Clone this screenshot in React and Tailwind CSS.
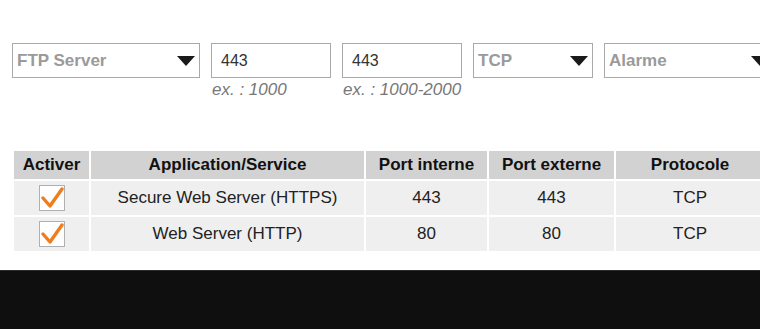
import React from "react";

const Arrow = () => (
  <svg width="18" height="10" viewBox="0 0 18 10" className="shrink-0">
    <polygon points="0,0 18,0 9,10" fill="#1a1a1a" />
  </svg>
);

const Select = ({ label, w }) => (
  <div
    className={`${w} h-[35px] shrink-0 border border-[#a9a9a9] bg-white flex items-center justify-between pl-[4px] pr-[4px]`}
  >
    <span className="text-[17px] font-bold text-[#9a9a9a]">{label}</span>
    <Arrow />
  </div>
);

const Input = ({ value, hint }) => (
  <div className="flex flex-col shrink-0">
    <div className="w-[120px] h-[35px] border border-[#a9a9a9] bg-white flex items-center pl-[9px] text-[16px] text-[#333]">
      {value}
    </div>
    <div className="mt-[2px] pl-[1px] text-[17px] italic text-[#777] leading-[20px]">{hint}</div>
  </div>
);

const Check = () => (
  <div className="w-[26px] h-[26px] border border-[#b0b0b0] bg-white mx-auto flex items-center justify-center">
    <svg width="24" height="22" viewBox="0 0 24 22">
      <path
        d="M3 11 L10 19 L22 2"
        fill="none"
        stroke="#ee7d1f"
        strokeWidth="3.4"
        strokeLinecap="round"
        strokeLinejoin="round"
      />
    </svg>
  </div>
);

const rows = [
  ["Secure Web Server (HTTPS)", "443", "443", "TCP"],
  ["Web Server (HTTP)", "80", "80", "TCP"],
];

export default function App() {
  return (
    <div
      className="w-[760px] h-[329px] overflow-hidden bg-white flex flex-col"
      style={{ fontFamily: '"Liberation Sans", Arial, sans-serif' }}
    >
      <div className="flex-1">
        <div className="flex items-start gap-[11px] pl-[12px] pt-[43px] w-[800px]">
          <Select label="FTP Server" w="w-[188px]" />
          <Input value="443" hint="ex. : 1000" />
          <Input value="443" hint="ex. : 1000-2000" />
          <Select label="TCP" w="w-[120px]" />
          <Select label="Alarme" w="w-[170px]" />
        </div>
        <table className="ml-[14px] mt-[51px] border-collapse w-[750px] table-fixed">
          <colgroup>
            <col className="w-[76px]" />
            <col className="w-[275px]" />
            <col className="w-[123px]" />
            <col className="w-[127px]" />
            <col className="w-[149px]" />
          </colgroup>
          <thead>
            <tr className="h-[29px]">
              {["Activer", "Application/Service", "Port interne", "Port externe", "Protocole"].map((h, i) => (
                <th
                  key={h}
                  className={`bg-[#d2d2d2] text-[17px] font-bold text-[#111] text-center p-0 border-b-[2px] border-white ${
                    i < 4 ? "border-r-[2px]" : ""
                  }`}
                >
                  {h}
                </th>
              ))}
            </tr>
          </thead>
          <tbody>
            {rows.map((r, ri) => (
              <tr key={ri} className="h-[36px]">
                <td className="bg-[#efefef] p-0 border-r-[2px] border-b-[2px] border-white">
                  <Check />
                </td>
                {r.map((c, ci) => (
                  <td
                    key={ci}
                    className={`bg-[#efefef] text-[17px] text-[#222] text-center p-0 border-b-[2px] border-white ${
                      ci < 3 ? "border-r-[2px]" : ""
                    }`}
                  >
                    {c}
                  </td>
                ))}
              </tr>
            ))}
          </tbody>
        </table>
      </div>
      <div className="h-[59px] bg-[#0f0f0f] border-t border-[#2a2a2a] shrink-0" />
    </div>
  );
}
